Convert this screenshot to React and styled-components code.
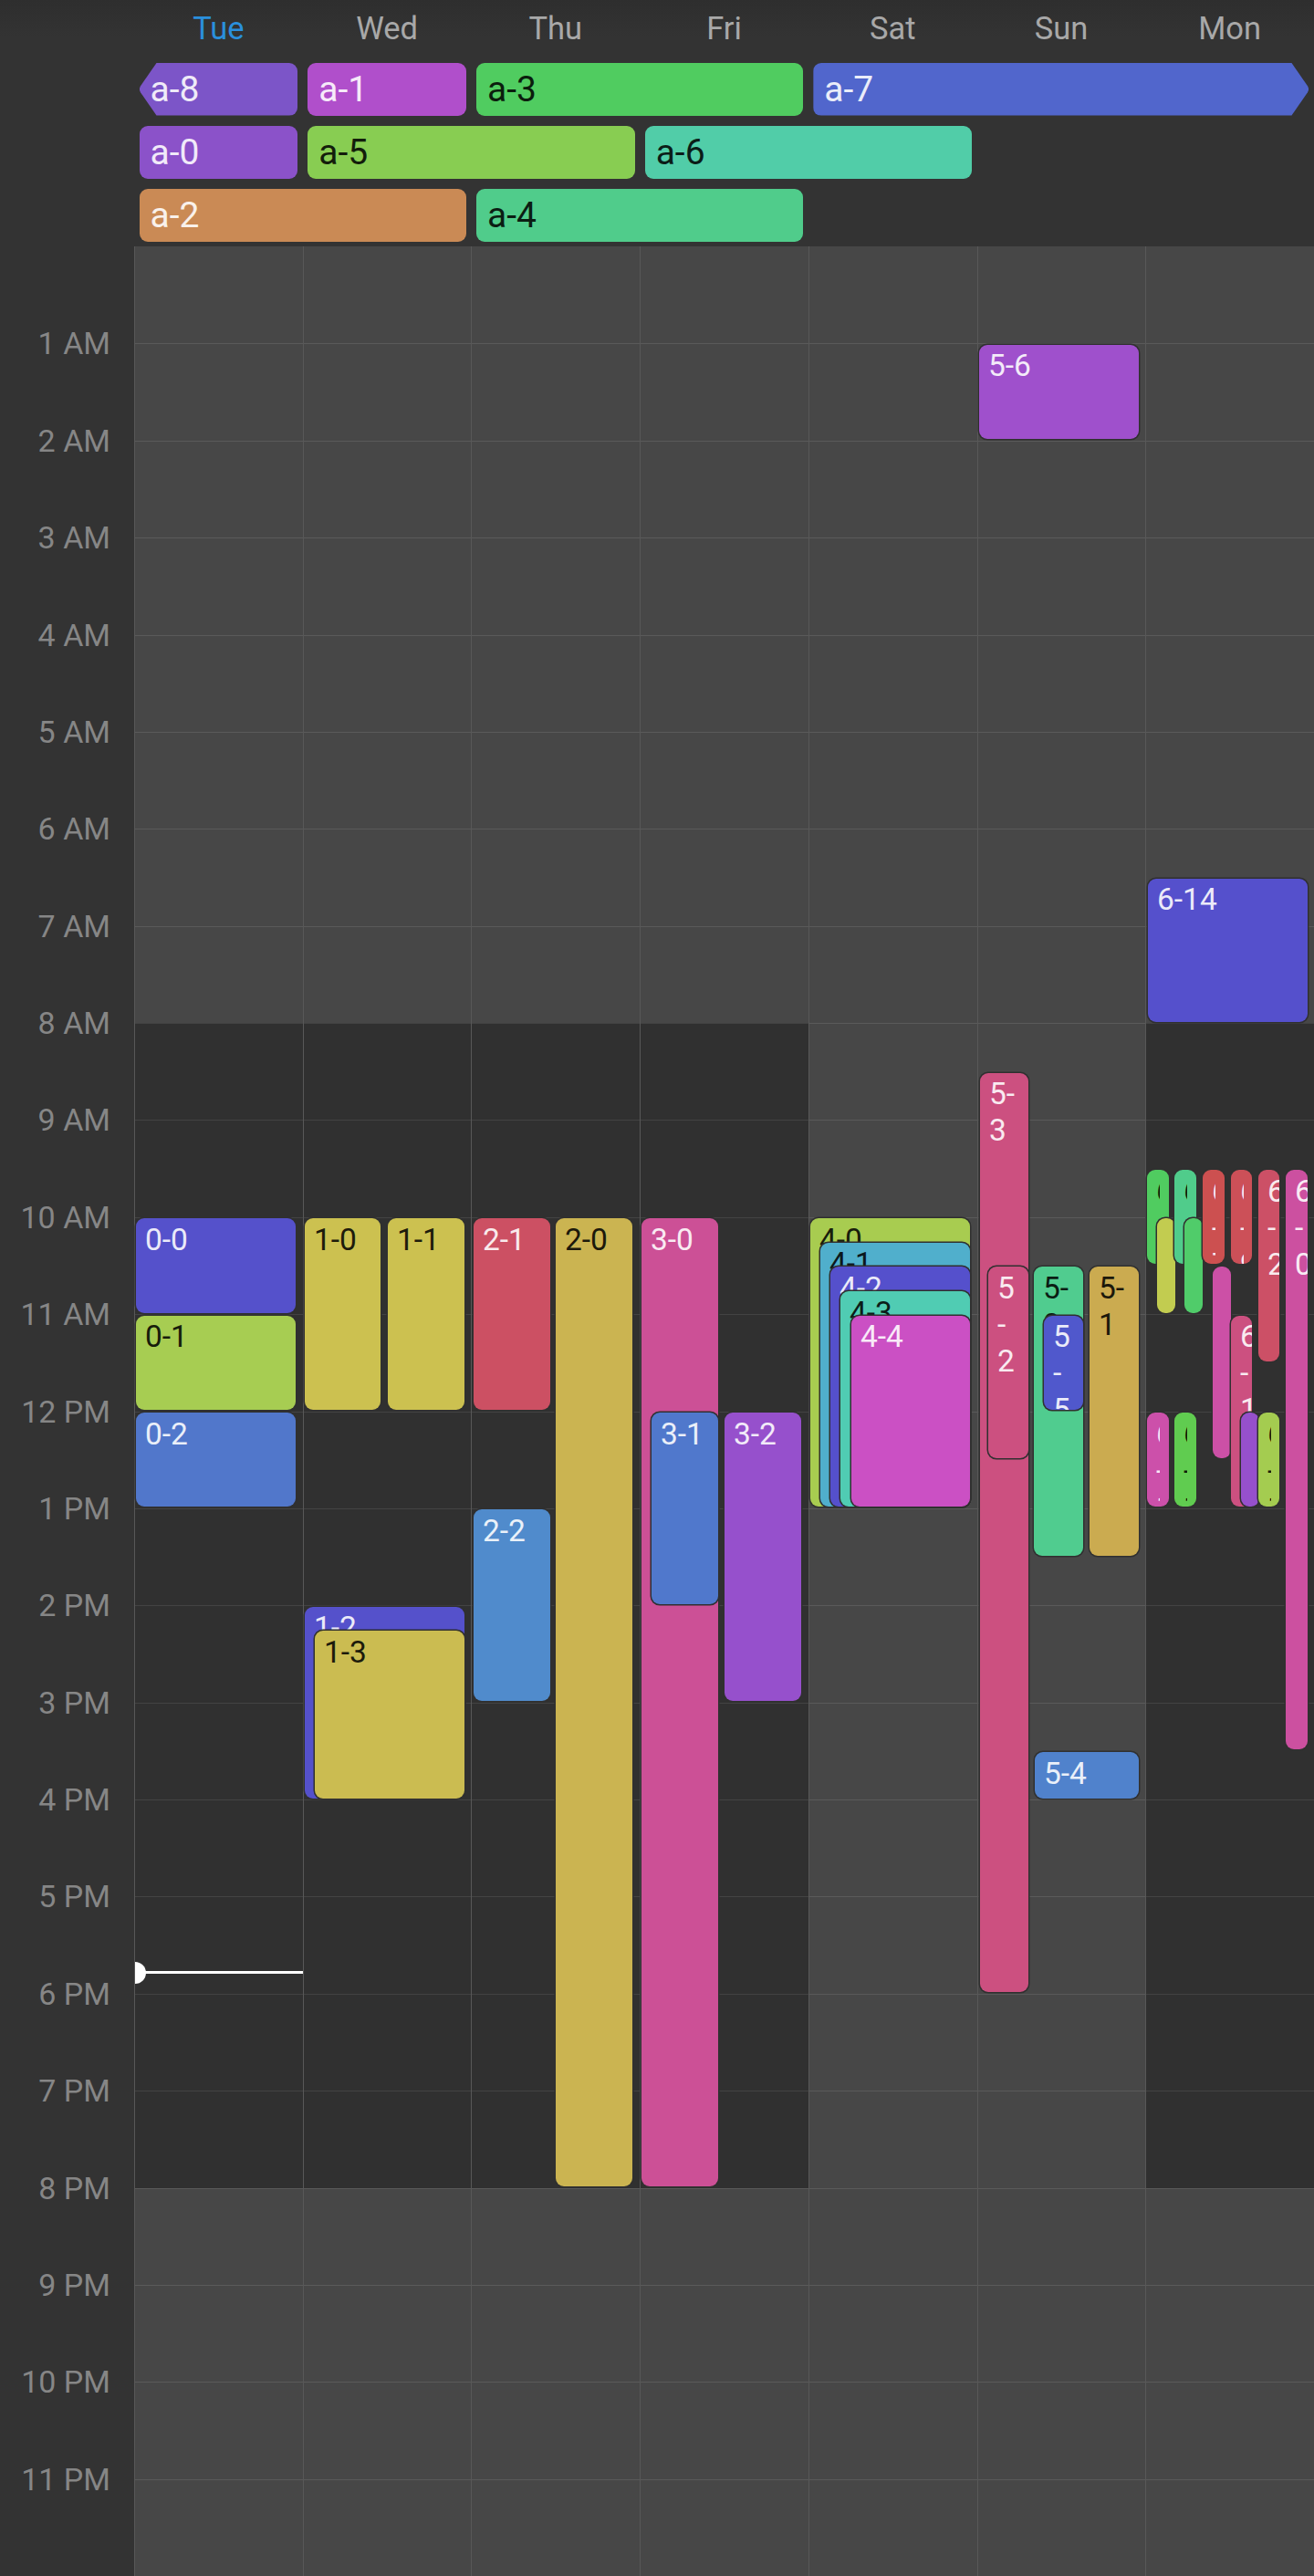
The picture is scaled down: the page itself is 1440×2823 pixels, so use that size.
import React from "react";
import styled, { createGlobalStyle } from "styled-components";

const HOUR = 106.375;
const GUTTER = 147;
const COL = (1440 - GUTTER) / 7;

const GlobalStyle = createGlobalStyle`
  html, body { margin: 0; padding: 0; background: #333333; }
  * { box-sizing: border-box; }
  body { font-family: Roboto, "Liberation Sans", sans-serif; }
`;

const Page = styled.div`
  width: 1440px;
  height: 2823px;
  overflow: hidden;
  background: #333333;
`;

const Header = styled.header`
  height: 270px;
  padding-left: ${GUTTER}px;
  background: linear-gradient(#2e2e2e, #333333 40px);
`;

const DayRow = styled.div`
  display: grid;
  grid-template-columns: repeat(7, 1fr);
  height: 62px;
  margin-bottom: 7px;
`;

const DayName = styled.div`
  text-align: center;
  font-size: 34.5px;
  line-height: 62px;
  color: ${(p) => (p.$today ? "#2a8fdc" : "#a8a8a8")};
`;

const AllDayGrid = styled.div`
  display: grid;
  grid-template-columns: repeat(7, 1fr);
  grid-auto-rows: 57.5px;
  row-gap: 11.5px;
`;

const tips = {
  left: "polygon(19px 0, 100% 0, 100% 100%, 19px 100%, 1.5px 56%, 0 50%, 1.5px 44%)",
  right:
    "polygon(0 0, calc(100% - 19px) 0, calc(100% - 1.5px) 44%, 100% 50%, calc(100% - 1.5px) 56%, calc(100% - 19px) 100%, 0 100%)",
};

const inkColor = (p) =>
  p.$ink === "dark"
    ? `color-mix(in srgb, ${p.$color} 14%, #000000)`
    : `color-mix(in srgb, ${p.$color} 12%, #ffffff)`;

const Chip = styled.div`
  grid-column: ${(p) => p.$col + 1} / span ${(p) => p.$span};
  grid-row: ${(p) => p.$row + 1};
  margin: 0 5.5px;
  padding-left: 12px;
  border-radius: 9px;
  background: ${(p) => p.$color};
  color: ${inkColor};
  font-size: 39px;
  line-height: 58px;
  ${(p) => p.$tip && `clip-path: ${tips[p.$tip]};`}
`;

const Body = styled.main`
  display: flex;
  height: 2553px;
`;

const TimeGutter = styled.div`
  flex: 0 0 ${GUTTER}px;
  background: #333333;
`;

const TimeRow = styled.div`
  height: ${HOUR}px;
  padding-right: 26px;
  text-align: right;
`;

const TimeLabel = styled.span`
  display: inline-block;
  transform: translateY(-50%);
  font-size: 34px;
  line-height: 40px;
  color: #868686;
`;

const Columns = styled.div`
  flex: 1;
  display: grid;
  grid-template-columns: repeat(7, 1fr);
`;

const DayColumn = styled.div`
  position: relative;
  border-left: 1px solid #585858;
`;

const HourCell = styled.div`
  height: ${HOUR}px;
  background: ${(p) => (p.$dark ? "#303030" : "#474747")};
  border-top: 1px solid ${(p) => (p.$first ? "transparent" : p.$dark ? "#434343" : "#5a5a5a")};
`;

const Event = styled.div`
  position: absolute;
  left: ${(p) => p.$left}px;
  width: ${(p) => p.$width}px;
  top: ${(p) => p.$start * HOUR + 1.5}px;
  height: ${(p) => (p.$end - p.$start) * HOUR - 3}px;
  padding: 3.5px 10px 0 10px;
  overflow: hidden;
  border-radius: 9px;
  background: ${(p) => p.$color};
  box-shadow: 0 0 0 1.5px #303030;
  color: ${inkColor};
  font-size: 33.5px;
  line-height: 40px;
`;

const EventLabel = styled.div`
  overflow-wrap: anywhere;
  ${(p) => p.$clip !== undefined && `width: ${p.$clip}px; overflow: hidden;`}
`;

const NowLine = styled.div`
  position: absolute;
  left: 0;
  right: 0;
  top: ${(p) => p.$hour * HOUR}px;
  height: 3px;
  background: #ffffff;
`;

const NowDot = styled.div`
  position: absolute;
  left: 0;
  top: -10.5px;
  width: 12px;
  height: 24px;
  border-radius: 0 12px 12px 0;
  background: #ffffff;
`;

const DAYS = ["Tue", "Wed", "Thu", "Fri", "Sat", "Sun", "Mon"];

const HOURS = Array.from({ length: 24 }, (_, h) => {
  if (h === 0) return "";
  if (h === 12) return "12 PM";
  return h < 12 ? `${h} AM` : `${h - 12} PM`;
});

const WORK_DAYS = [true, true, true, true, false, false, true];

const ALL_DAY = [
  { id: "a-8", col: 0, span: 1, row: 0, color: "#7c55c8", ink: "light", tip: "left" },
  { id: "a-1", col: 1, span: 1, row: 0, color: "#b04fcb", ink: "light" },
  { id: "a-3", col: 2, span: 2, row: 0, color: "#50cc60", ink: "dark" },
  { id: "a-7", col: 4, span: 3, row: 0, color: "#5166cc", ink: "light", tip: "right" },
  { id: "a-0", col: 0, span: 1, row: 1, color: "#8b52c9", ink: "light" },
  { id: "a-5", col: 1, span: 2, row: 1, color: "#88cd52", ink: "dark" },
  { id: "a-6", col: 3, span: 2, row: 1, color: "#51cda8", ink: "dark" },
  { id: "a-2", col: 0, span: 2, row: 2, color: "#ca8a55", ink: "light" },
  { id: "a-4", col: 2, span: 2, row: 2, color: "#50cc8b", ink: "dark" },
];

// x0 and x1 are page pixels, start and end are hours of the day
const EVENTS = [
  [
    { id: "0-0", start: 10, end: 11, x0: 149, x1: 324, color: "#5551cb", ink: "light" },
    { id: "0-1", start: 11, end: 12, x0: 149, x1: 324, color: "#a7cd52", ink: "dark" },
    { id: "0-2", start: 12, end: 13, x0: 149, x1: 324, color: "#5177cb", ink: "light" },
  ],
  [
    { id: "1-0", start: 10, end: 12, x0: 334, x1: 417, color: "#ccc150", ink: "dark" },
    { id: "1-1", start: 10, end: 12, x0: 425, x1: 509, color: "#ccc150", ink: "dark" },
    { id: "1-2", start: 14, end: 16, x0: 334, x1: 509, color: "#5551cb", ink: "light" },
    { id: "1-3", start: 14.25, end: 16, x0: 345, x1: 509, color: "#cbbc51", ink: "dark" },
  ],
  [
    { id: "2-1", start: 10, end: 12, x0: 519, x1: 603, color: "#cc5063", ink: "light" },
    { id: "2-2", start: 13, end: 15, x0: 519, x1: 603, color: "#508bcc", ink: "light" },
    { id: "2-0", start: 10, end: 20, x0: 609, x1: 693, color: "#cbb451", ink: "dark" },
  ],
  [
    { id: "3-0", start: 10, end: 20, x0: 703, x1: 787, color: "#cc5096", ink: "light" },
    { id: "3-1", start: 12, end: 14, x0: 714, x1: 787, color: "#5078cc", ink: "light" },
    { id: "3-2", start: 12, end: 15, x0: 794, x1: 878, color: "#9650cc", ink: "light" },
  ],
  [
    { id: "4-0", start: 10, end: 13, x0: 888, x1: 1063, color: "#a8cc50", ink: "dark" },
    { id: "4-1", start: 10.25, end: 13, x0: 899, x1: 1063, color: "#50afcc", ink: "dark" },
    { id: "4-2", start: 10.5, end: 13, x0: 910, x1: 1063, color: "#5550cc", ink: "light" },
    { id: "4-3", start: 10.75, end: 13, x0: 921, x1: 1063, color: "#50ccb3", ink: "dark" },
    { id: "4-4", start: 11, end: 13, x0: 933, x1: 1063, color: "#cb50c4", ink: "light" },
  ],
  [
    { id: "5-6", start: 1, end: 2, x0: 1073, x1: 1248, color: "#9f50cc", ink: "light" },
    { id: "5-3", start: 8.5, end: 18, x0: 1074, x1: 1127, color: "#cc5080", ink: "light" },
    { id: "5-2", start: 10.5, end: 12.5, x0: 1083, x1: 1127, color: "#cc5080", ink: "light" },
    { id: "5-0", start: 10.5, end: 13.5, x0: 1133, x1: 1187, color: "#50cc8f", ink: "dark" },
    { id: "5-5", start: 11, end: 12, x0: 1144, x1: 1187, color: "#5058cc", ink: "light" },
    { id: "5-1", start: 10.5, end: 13.5, x0: 1194, x1: 1248, color: "#cbab50", ink: "dark" },
    { id: "5-4", start: 15.5, end: 16, x0: 1134, x1: 1248, color: "#5082cc", ink: "light" },
  ],
  [
    { id: "6-14", start: 6.5, end: 8, x0: 1258, x1: 1433, color: "#5550cc", ink: "light" },
    { id: "6-3", start: 9.5, end: 10.5, x0: 1257, x1: 1281, color: "#50cc60", ink: "dark", clip: 4 },
    { id: "6-4", start: 10, end: 11, x0: 1268, x1: 1281, color: "#c2cc50", ink: "dark", clip: 0 },
    { id: "6-5", start: 9.5, end: 10.5, x0: 1287, x1: 1311, color: "#50cc8b", ink: "dark", clip: 4 },
    { id: "6-6", start: 10, end: 11, x0: 1298, x1: 1311, color: "#50cc6a", ink: "dark", clip: 0 },
    { id: "6-7", start: 9.5, end: 10.5, x0: 1318, x1: 1342, color: "#cc5050", ink: "light", clip: 4 },
    { id: "6-8", start: 10.5, end: 12.5, x0: 1329, x1: 1342, color: "#cc50a6", ink: "light", clip: 0 },
    { id: "6-9", start: 9.5, end: 10.5, x0: 1349, x1: 1372, color: "#cc5058", ink: "light", clip: 4 },
    { id: "6-1", start: 11, end: 13, x0: 1349, x1: 1372, color: "#cc5080", ink: "light" },
    { id: "6-10", start: 12, end: 13, x0: 1360, x1: 1372, color: "#9650cc", ink: "light", clip: 0 },
    { id: "6-2", start: 9.5, end: 11.5, x0: 1379, x1: 1402, color: "#cc5066", ink: "light" },
    { id: "6-0", start: 9.5, end: 15.5, x0: 1409, x1: 1433, color: "#cc50a0", ink: "light" },
    { id: "6-11", start: 12, end: 13, x0: 1257, x1: 1281, color: "#cc50aa", ink: "light", clip: 4 },
    { id: "6-12", start: 12, end: 13, x0: 1287, x1: 1311, color: "#60cc50", ink: "dark", clip: 4 },
    { id: "6-13", start: 12, end: 13, x0: 1379, x1: 1402, color: "#a4cc50", ink: "dark", clip: 4 },
  ],
];

export default function App() {
  return (
    <Page>
      <GlobalStyle />
      <Header>
        <DayRow>
          {DAYS.map((d, i) => (
            <DayName key={d} $today={i === 0}>
              {d}
            </DayName>
          ))}
        </DayRow>
        <AllDayGrid>
          {ALL_DAY.map((c) => (
            <Chip key={c.id} $col={c.col} $span={c.span} $row={c.row} $color={c.color} $ink={c.ink} $tip={c.tip}>
              {c.id}
            </Chip>
          ))}
        </AllDayGrid>
      </Header>
      <Body>
        <TimeGutter>
          {HOURS.map((label, h) => (
            <TimeRow key={h}>
              <TimeLabel>{label}</TimeLabel>
            </TimeRow>
          ))}
        </TimeGutter>
        <Columns>
          {DAYS.map((d, day) => (
            <DayColumn key={d}>
              {HOURS.map((_, h) => (
                <HourCell key={h} $first={h === 0} $dark={WORK_DAYS[day] && h >= 8 && h < 20} />
              ))}
              {EVENTS[day].map((e) => (
                <Event
                  key={e.id}
                  $left={e.x0 - GUTTER - day * COL - 1}
                  $width={e.x1 - e.x0}
                  $start={e.start}
                  $end={e.end}
                  $color={e.color}
                  $ink={e.ink}
                >
                  <EventLabel $clip={e.clip}>{e.id}</EventLabel>
                </Event>
              ))}
              {day === 0 && (
                <NowLine $hour={17.77}>
                  <NowDot />
                </NowLine>
              )}
            </DayColumn>
          ))}
        </Columns>
      </Body>
    </Page>
  );
}
